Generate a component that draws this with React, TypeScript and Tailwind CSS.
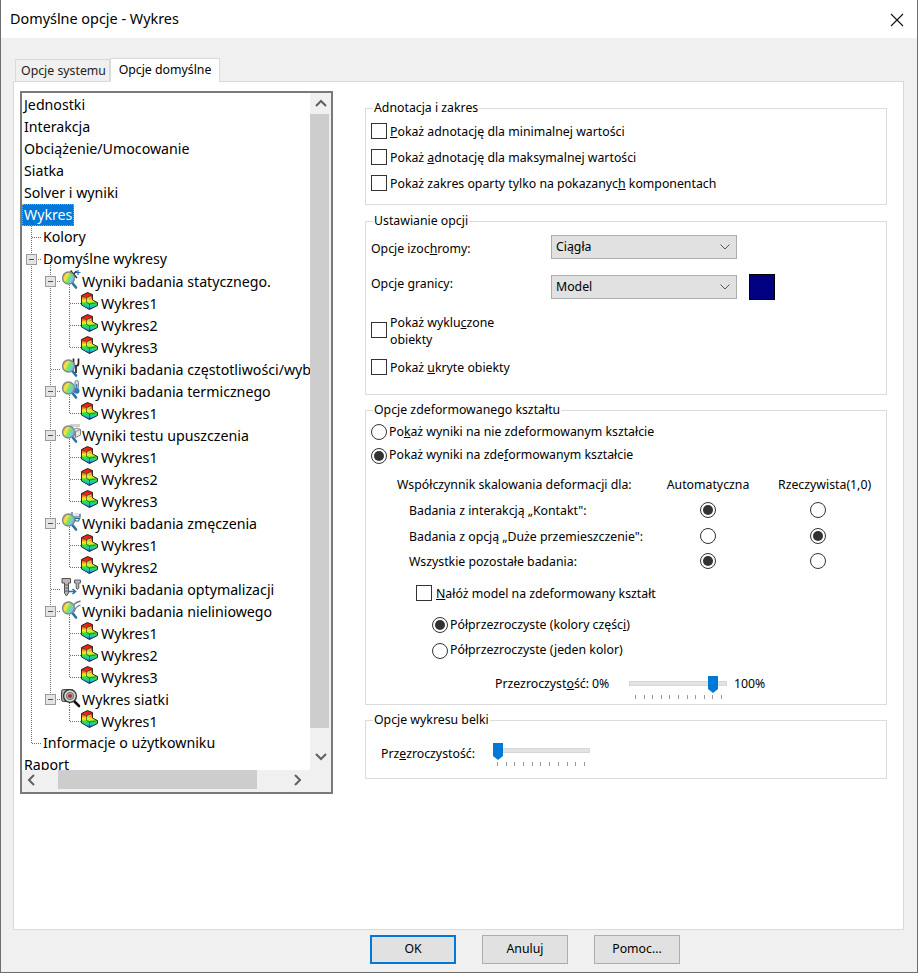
import React from "react";

const FONT = "font-['Noto_Sans','Open_Sans',sans-serif]";

function Rainbow() {
  return (
    <defs>
      <linearGradient id="rb" x1="0" y1="0" x2="0" y2="1">
        <stop offset="0" stopColor="#f01010" />
        <stop offset="0.22" stopColor="#f02818" />
        <stop offset="0.34" stopColor="#f88818" />
        <stop offset="0.48" stopColor="#fcf020" />
        <stop offset="0.66" stopColor="#30e030" />
        <stop offset="0.84" stopColor="#18c0e0" />
        <stop offset="1" stopColor="#1830d8" />
      </linearGradient>
      <linearGradient id="lens" x1="0" y1="0.2" x2="1" y2="0.7">
        <stop offset="0" stopColor="#f07028" />
        <stop offset="0.3" stopColor="#f8e848" />
        <stop offset="0.55" stopColor="#80e060" />
        <stop offset="0.8" stopColor="#60d0f0" />
        <stop offset="1" stopColor="#e870d0" />
      </linearGradient>
    </defs>
  );
}

function PlotIcon() {
  return (
    <svg width="18" height="18" viewBox="0 0 18 18" className="shrink-0 relative -top-[2px] mr-[2px]">
      <path d="M0.5 3.5L6.5 0.5L11.5 2.5V8L16.5 10.5V13.5L8.5 17.5L0.5 13Z" fill="url(#rb)" stroke="#1c1c1c" strokeWidth="0.9" />
      <path d="M5.5 5.5L11.5 2.5M5.5 5.5L0.5 3.5M5.5 5.5V10.5L8.5 12V17.5M8.5 12L16.5 10.5" fill="none" stroke="#1c3c1c" strokeWidth="0.6" />
      <path d="M10 5L7 6.5V9.5L9 10.5" fill="none" stroke="#b8f070" strokeWidth="1" />
    </svg>
  );
}

function Lens() {
  return (
    <>
      <line x1="11" y1="12.5" x2="15" y2="17.5" stroke="#2a70a0" strokeWidth="2.6" strokeLinecap="round" />
      <circle cx="7.5" cy="8" r="6" fill="url(#lens)" stroke="#858585" strokeWidth="1.3" />
    </>
  );
}

function GroupIcon({ kind }: { kind: string }) {
  return (
    <svg width="20" height="20" viewBox="0 0 20 20" className="shrink-0 relative -top-[1px] mr-[1px]">
      {kind === "static" && (
        <>
          <path d="M9.5 0.5L16 8M15.5 1L9 8M10.5 5L13 8" stroke="#222" strokeWidth="1.3" fill="none" />
          <path d="M17 0V5M15 2.5H19.5" stroke="#2a70b0" strokeWidth="1.2" />
        </>
      )}
      {kind === "freq" && (
        <path d="M12.5 0.5V5C12.5 7 13.5 8 15 8C16.5 8 17.5 7 17.5 5V0.5M15 8V15" stroke="#222" strokeWidth="1.7" fill="none" />
      )}
      {kind === "thermal" && (
        <>
          <rect x="14" y="0.5" width="3.4" height="9" rx="1.7" fill="#d8e4ee" stroke="#567" strokeWidth="0.8" />
          <circle cx="15.7" cy="11" r="2.8" fill="#2a78b8" />
          <rect x="15.1" y="4" width="1.2" height="6" fill="#2a78b8" />
        </>
      )}
      {kind === "drop" && (
        <>
          <path d="M10 0V3M12 0V3M14 0V3M16 0V3M18 0V3" stroke="#888" strokeWidth="0.8" />
          <path d="M11.5 6L16 4L19.5 5.5V11L14.5 13.5Z" fill="#e8e8e8" stroke="#777" strokeWidth="0.9" />
          <path d="M14.5 7.5L19.5 5.5M14.5 7.5V13.5" stroke="#777" strokeWidth="0.9" fill="none" />
        </>
      )}
      {kind === "fatigue" && (
        <>
          <rect x="13" y="1" width="7" height="6" fill="#e4e4e4" />
          <path d="M11 0V5H19V2M13.5 6.5H18.5L17.5 9H14.5Z" stroke="#2a6a9a" strokeWidth="1.2" fill="none" />
        </>
      )}
      {kind === "nonlinear" && (
        <>
          <path d="M12 3H20V1H15Z" fill="#e8e8e8" />
          <path d="M11 9C12 5 15 2 19.5 1M13 12C14 8 16 6 19.5 5" stroke="#6a7a8a" strokeWidth="1.3" fill="none" />
        </>
      )}
      {kind === "opt" ? (
        <>
          <path d="M1 0.5H9.5V5H7.5V15L5.5 18L3.5 15V5H1Z" fill="#b8b8b8" stroke="#444" strokeWidth="0.9" />
          <path d="M4 7H7M4 10H7M4 13H7" stroke="#444" strokeWidth="0.8" />
          <path d="M13.5 2H19.5V5H17.8V10L16.5 11.5L15.2 10V5H13.5Z" fill="#b8b8b8" stroke="#444" strokeWidth="0.8" />
          <path d="M7 13.5H14M11.5 11L14.5 13.5L11.5 16" stroke="#2a70b0" strokeWidth="1.6" fill="none" />
        </>
      ) : kind === "mesh" ? (
        <>
          <rect x="0.5" y="1.5" width="12" height="12" rx="2" fill="#a8a8a8" stroke="#444" />
          <line x1="13" y1="13" x2="18" y2="18" stroke="#111" strokeWidth="2.6" strokeLinecap="round" />
          <circle cx="9" cy="8" r="6.4" fill="#d8d8d8" stroke="#333" strokeWidth="1.3" />
          <circle cx="9" cy="8" r="3.6" fill="#b0b0b0" stroke="#555" strokeWidth="0.8" />
          <circle cx="9" cy="8" r="2" fill="#b03020" />
        </>
      ) : (
        <Lens />
      )}
    </svg>
  );
}

type Row = {
  t: React.ReactNode;
  pad: string;
  icon?: React.ReactNode;
  full?: number[];
  half?: number[];
  low?: number[];
  box?: number;
  conn?: [number, number];
  selected?: boolean;
};

const group = (t: string, kind: string, opts: { box?: boolean; last?: boolean } = {}): Row => {
  const box = opts.box !== false;
  return {
    t,
    pad: "pl-[39px]",
    icon: <GroupIcon kind={kind} />,
    full: opts.last ? [31] : [31, 50],
    half: opts.last ? [50] : [],
    low: box ? [69] : [],
    box: box ? 50 : undefined,
    conn: [50, 60],
  };
};

const plot = (n: number, last = false, inner = [31, 50]): Row => ({
  t: `Wykres${n}`,
  pad: "pl-[59px]",
  icon: <PlotIcon />,
  full: last ? inner : [...inner, 69],
  half: last ? [69] : [],
  conn: [69, 80],
});

const top = (t: string, selected = false): Row => ({ t, pad: "pl-[2px]", selected });

const rows: Row[] = [
  top("Jednostki"),
  top("Interakcja"),
  top("Obciążenie/Umocowanie"),
  top("Siatka"),
  top("Solver i wyniki"),
  { ...top("Wykres", true), low: [31] },
  { t: "Kolory", pad: "pl-[21px]", full: [31], conn: [31, 41] },
  { t: "Domyślne wykresy", pad: "pl-[21px]", full: [31], low: [50], box: 31, conn: [31, 41] },
  group("Wyniki badania statycznego.", "static"),
  plot(1),
  plot(2),
  plot(3, true),
  group("Wyniki badania częstotliwości/wyboczenia", "freq", { box: false }),
  group("Wyniki badania termicznego", "thermal"),
  plot(1, true),
  group("Wyniki testu upuszczenia", "drop"),
  plot(1),
  plot(2),
  plot(3, true),
  group("Wyniki badania zmęczenia", "fatigue"),
  plot(1),
  plot(2, true),
  group("Wyniki badania optymalizacji", "opt", { box: false }),
  group("Wyniki badania nieliniowego", "nonlinear"),
  plot(1),
  plot(2),
  plot(3, true),
  group("Wykres siatki", "mesh", { last: true }),
  plot(1, true, [31]),
  { t: "Informacje o użytkowniku", pad: "pl-[21px]", half: [31], conn: [31, 41] },
  top("Raport"),
];

function TreeRow({ r }: { r: Row }) {
  return (
    <div className={`relative h-[22px] shrink-0 flex items-center whitespace-nowrap ${r.pad}`}>
      <svg width="310" height="22" className="absolute left-0 top-0" shapeRendering="crispEdges">
        <g stroke="#707070" strokeDasharray="1 1" fill="none">
          {(r.full || []).map((x) => <line key={x} x1={x - 21.5} x2={x - 21.5} y1="0" y2="22" />)}
          {(r.half || []).map((x) => <line key={x} x1={x - 21.5} x2={x - 21.5} y1="0" y2="11" />)}
          {(r.low || []).map((x) => <line key={x} x1={x - 21.5} x2={x - 21.5} y1="11" y2="22" />)}
          {r.conn && <line x1={r.conn[0] - 21} x2={r.conn[1] - 21} y1="11.5" y2="11.5" />}
        </g>
        {r.box !== undefined && (
          <g>
            <rect x={r.box - 26.5} y="6.5" width="10" height="10" fill="#e4e4e4" stroke="#9a9a9a" />
            <line x1={r.box - 24} x2={r.box - 19} y1="11.5" y2="11.5" stroke="#3c4f8c" />
          </g>
        )}
      </svg>
      {r.icon}
      <span
        className={
          r.selected
            ? "relative -ml-[2px] px-[2px] h-[22px] leading-[21px] bg-[#0078d7] text-white outline-1 outline-dotted outline-[#e89030] -outline-offset-1"
            : r.icon
              ? "relative top-px text-black"
              : "relative text-black"
        }
      >
        {r.t}
      </span>
    </div>
  );
}

function Chevron({ dir }: { dir: "up" | "down" | "left" | "right" }) {
  const d = {
    up: "M1 7L6 2L11 7",
    down: "M1 2L6 7L11 2",
    left: "M7 1L2 6L7 11",
    right: "M2 1L7 6L2 11",
  }[dir];
  const vertical = dir === "up" || dir === "down";
  return (
    <svg width={vertical ? 12 : 9} height={vertical ? 9 : 12} viewBox={vertical ? "0 0 12 9" : "0 0 9 12"}>
      <path d={d} fill="none" stroke="#606060" strokeWidth="2" />
    </svg>
  );
}

function Tree() {
  return (
    <div className="w-[313px] h-[703px] shrink-0 border-2 border-[#7a7a7a] flex flex-col bg-white overflow-hidden text-[14.2px]">
      <div className="flex h-[677px] shrink-0">
        <div className="w-[288px] h-[677px] overflow-hidden flex flex-col pt-[1px]">
          {rows.map((r, i) => <TreeRow key={i} r={r} />)}
        </div>
        <div className="w-[21px] shrink-0 bg-[#f0f0f0] flex flex-col">
          <div className="h-[21px] flex items-center justify-center"><Chevron dir="up" /></div>
          <div className="w-[19px] h-[614px] bg-[#cdcdcd]" />
          <div className="flex-1 flex items-center justify-center pt-[14px]"><Chevron dir="down" /></div>
        </div>
      </div>
      <div className="flex-1 bg-[#f0f0f0] flex items-center pb-[3px]">
        <div className="w-[36px] pl-[5px] flex"><Chevron dir="left" /></div>
        <div className="w-[199px] h-[19px] bg-[#cdcdcd]" />
        <div className="ml-[36px] flex"><Chevron dir="right" /></div>
      </div>
    </div>
  );
}

function Check({ children, className = "" }: { children: React.ReactNode; className?: string }) {
  return (
    <div className={`flex items-center gap-[3px] ${className}`}>
      <span className="w-[16px] h-[16px] shrink-0 border border-[#333] bg-white" />
      <span className="leading-[17px] pt-[1px]">{children}</span>
    </div>
  );
}

function Radio({ on, children, className = "" }: { on?: boolean; children?: React.ReactNode; className?: string }) {
  return (
    <div className={`flex items-center gap-[2px] ${className}`}>
      <span className="w-[16px] h-[16px] shrink-0 rounded-full border border-[#333] bg-white flex items-center justify-center">
        {on && <span className="w-[10px] h-[10px] rounded-full bg-[#333]" />}
      </span>
      {children && <span>{children}</span>}
    </div>
  );
}

function Group({ title, className, children }: { title: string; className: string; children: React.ReactNode }) {
  return (
    <fieldset className={`border border-[#dcdcdc] rounded-none shrink-0 min-w-0 px-[5px] ${className}`}>
      <legend className="ml-[2px] px-[1px] h-[18px] leading-[18px]">{title}</legend>
      {children}
    </fieldset>
  );
}

function Select({ value }: { value: string }) {
  return (
    <div className="w-[186px] h-[24px] bg-[#e1e1e1] border border-[#adadad] flex items-center justify-between pl-[4px] pr-[6px]">
      <span className="pt-[1px]">{value}</span>
      <svg width="10" height="6" viewBox="0 0 10 6">
        <path d="M0.5 0.5L5 5L9.5 0.5" fill="none" stroke="#555" />
      </svg>
    </div>
  );
}

function Slider({ width, thumb, ticks }: { width: string; thumb: string; ticks: string }) {
  return (
    <div className={`relative h-[25px] ${width}`}>
      <div className="absolute left-0 right-0 top-[6px] h-[5px] bg-[#e3e3e3] border border-[#d6d6d6]" />
      <svg width="10" height="17" viewBox="0 0 10 17" className={`absolute top-[1px] ${thumb}`}>
        <path d="M0 0H10V13L5 17L0 13Z" fill="#0078d7" />
      </svg>
      <div className={`absolute top-[20px] h-[4px] flex justify-between ${ticks}`}>
        {Array.from({ length: 11 }).map((_, i) => (
          <span key={i} className="w-px h-[4px] bg-[#9a9a9a]" />
        ))}
      </div>
    </div>
  );
}

function DialogButton({ children, primary }: { children: React.ReactNode; primary?: boolean }) {
  return (
    <button
      className={`w-[86px] h-[29px] bg-[#e1e1e1] text-black text-[12.3px] ${
        primary ? "border-2 border-[#0078d7]" : "border border-[#adadad]"
      }`}
    >
      {children}
    </button>
  );
}

function RainbowDefs() {
  return (
    <svg width="0" height="0" className="absolute">
      <Rainbow />
    </svg>
  );
}

export default function App() {
  return (
    <div className={`w-[918px] h-[973px] flex flex-col bg-[#f0f0f0] border-x border-b border-[#6e6e6e] overflow-hidden text-black text-[12.3px] ${FONT}`}>
      <RainbowDefs />
      <div className="h-[38px] shrink-0 bg-white flex items-center justify-between pl-[9px] pr-[13px]">
        <span className="text-[14.4px]">Domyślne opcje - Wykres</span>
        <svg width="14" height="14" viewBox="0 0 14 14" className="relative top-px">
          <path d="M1 1L13 13M13 1L1 13" stroke="#111" strokeWidth="1.1" />
        </svg>
      </div>

      <div className="h-[43px] shrink-0 flex items-end pl-[14px] pt-[17px]">
        <div className="h-[22px] w-[95px] bg-[#f0f0f0] border border-b-0 border-[#d9d9d9] flex items-center justify-center text-[12.3px] text-[#222] pt-[1px] pl-[2px]">Opcje systemu</div>
        <div className="h-[24px] w-[110px] bg-white border border-b-0 border-[#d9d9d9] flex items-center justify-center text-[12.3px] relative top-px z-10">Opcje domyślne</div>
      </div>

      <div className="h-[849px] w-[891px] ml-[12px] shrink-0 bg-white border border-[#d9d9d9] flex pl-[6px] pt-[9px] gap-[32px]">
        <Tree />
        <div className="w-[522px] flex flex-col gap-[6px] pt-[8px]">
          <Group title="Adnotacja i zakres" className="h-[106px] mb-[1px]">
            <Check className="h-[26px] mt-[1px]"><u>P</u>okaż adnotację dla minimalnej wartości</Check>
            <Check className="h-[26px]">Pokaż <u>a</u>dnotację dla maksymalnej wartości</Check>
            <Check className="h-[25px]">Pokaż zakres oparty tylko na pokazanyc<u>h</u> komponentach</Check>
          </Group>
          <Group title="Ustawianie opcji" className="h-[183px]">
            <div className="flex h-[24px] mt-[5px]">
              <span className="w-[180px] pt-[5px]">Opcje izoc<u>h</u>romy:</span>
              <Select value="Ciągła" />
            </div>
            <div className="flex h-[26px] mt-[15px]">
              <span className="w-[180px] pt-[1px]">Opcje <u>g</u>ranicy:</span>
              <div className="pt-[1px]"><Select value="Model" /></div>
              <span className="ml-[12px] w-[26px] h-[26px] bg-[#000080] border border-black" />
            </div>
            <Check className="h-[34px] mt-[13px] w-[150px]">Pokaż wyklu<u>c</u>zone obiekty</Check>
            <Check className="h-[26px] mt-[7px]">Pokaż <u>u</u>kryte obiekty</Check>
          </Group>
          <Group title="Opcje zdeformowanego kształtu" className="h-[304px]">
            <Radio className="h-[24px] mt-[1px]">Po<u>k</u>aż wyniki na nie zdeformowanym kształcie</Radio>
            <Radio on className="h-[23px]">Pokaż wyniki na zde<u>f</u>ormowanym kształcie</Radio>
            <div className="grid grid-cols-[282px_110px_110px] mt-[6px] auto-rows-[25.5px] items-center">
              <span className="pl-[26px] relative -top-px">Współczynnik skalowania deformacji dla:</span>
              <span className="text-center relative -top-px">Automatyczna</span>
              <span className="pl-[15px] relative -top-px">Rzeczywista(1,0)</span>
              <span className="pl-[38px]">Badania z interakcją „Kontakt":</span>
              <Radio on className="justify-center relative -top-px" />
              <Radio className="justify-center relative -top-px" />
              <span className="pl-[38px]">Badania z opcją „Duże przemieszczenie":</span>
              <Radio className="justify-center relative -top-px" />
              <Radio on className="justify-center relative -top-px" />
              <span className="pl-[38px]">Wszystkie pozostałe badania:</span>
              <Radio on className="justify-center relative -top-px" />
              <Radio className="justify-center relative -top-px" />
            </div>
            <Check className="h-[24px] mt-[6px] pl-[45px] gap-[4px]"><u>N</u>ałóż model na zdeformowany kształt</Check>
            <Radio on className="h-[26px] mt-[7px] pl-[61px] gap-[0px]">Półprzezroczyste (kolory częśc<u>i</u>)</Radio>
            <Radio className="h-[25px] pl-[61px] gap-[0px]">Półprzezroczyste (<u>j</u>eden kolor)</Radio>
            <div className="flex mt-[12px] pl-[124px] h-[28px]">
              <span className="w-[97px]">Przezroczyst<u>o</u>ść:</span>
              <span className="w-[37px]">0%</span>
              <Slider width="w-[98px]" thumb="left-[79px]" ticks="left-[6px] w-[87px]" />
              <span className="ml-[7px]">100%</span>
            </div>
          </Group>
          <Group title="Opcje wykresu belki" className="h-[68px]">
            <div className="flex h-[36px] mt-[3px] pl-[10px]">
              <span className="w-[112px] pt-[13px] leading-[17px]">Prz<u>e</u>zroczystość:</span>
              <div className="pt-[10px]">
                <Slider width="w-[97px]" thumb="left-[0px]" ticks="left-[4px] w-[88px]" />
              </div>
            </div>
          </Group>
        </div>
      </div>

      <div className="flex-1 flex items-center gap-[26px] pl-[369px] pb-[3px]">
        <DialogButton primary>OK</DialogButton>
        <DialogButton>Anuluj</DialogButton>
        <DialogButton>Pomoc...</DialogButton>
      </div>
    </div>
  );
}
